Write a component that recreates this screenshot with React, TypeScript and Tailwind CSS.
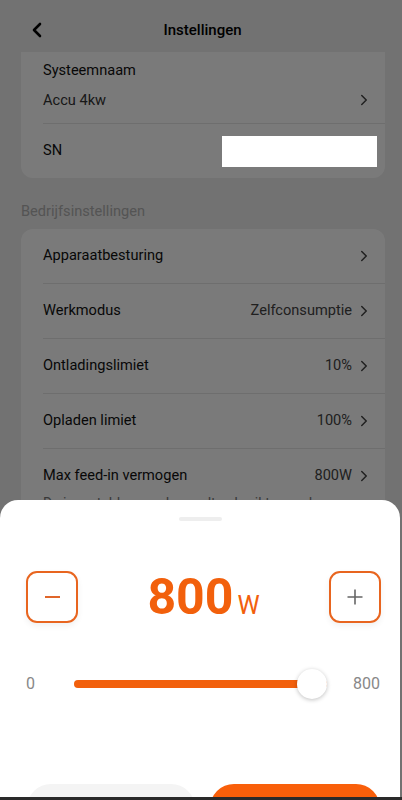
import React, { useState } from 'react'
import { ChevronLeft, ChevronRight } from 'lucide-react'

const font = { fontFamily: 'Roboto, "Noto Sans", sans-serif' }

interface RowProps {
  label: string
  value?: string
}

function SettingRow({ label, value }: RowProps) {
  return (
    <div className="pl-[22px]">
      <div className="flex h-[55px] items-center justify-between border-b border-[#e6e6e6] pr-[12px]">
        <span className="text-[14.6px] text-[#111]">{label}</span>
        <div className="flex items-center gap-[3px]">
          {value && <span className="text-[14.6px] text-[#444]">{value}</span>}
          <ChevronRight className="h-[18px] w-[18px] text-[#444]" strokeWidth={2} />
        </div>
      </div>
    </div>
  )
}

export default function App() {
  const [power, setPower] = useState(800)
  const max = 800
  const pct = (power / max) * 100

  return (
    <div className="relative h-[800px] w-full overflow-hidden bg-[#eeeeee]" style={font}>
      {/* Header */}
      <div className="flex h-[52px] items-center bg-[#eeeeee] pt-[8px]">
        <button className="ml-[25px] flex h-[24px] w-[24px] items-center justify-center text-black">
          <ChevronLeft className="h-[26px] w-[26px]" strokeWidth={2.6} />
        </button>
        <div className="flex-1 pr-[46px] text-center text-[15px] font-medium text-black">
          Instellingen
        </div>
      </div>

      {/* Scrolled content */}
      <div className="pl-[21px] pr-[17px]">
        <div className="rounded-b-xl bg-white">
          <div className="pl-[22px] pt-[8px]">
            <div className="text-[14.6px] leading-[20px] text-[#111]">Systeemnaam</div>
            <div className="mt-[10px] flex items-center justify-between border-b border-[#e6e6e6] pb-[13px] pr-[12px]">
              <span className="text-[14.6px] leading-[20px] text-[#333]">Accu 4kw</span>
              <ChevronRight className="h-[18px] w-[18px] text-[#444]" strokeWidth={2} />
            </div>
          </div>
          <div className="flex h-[54px] items-center justify-between pl-[22px] pr-[8px]">
            <span className="text-[14.6px] text-[#111]">SN</span>
            <div className="relative z-20 mt-[1px] h-[31px] w-[155px] bg-white" />
          </div>
        </div>

        <div className="mt-[23px] text-[14.6px] text-[#b0b0b0]">Bedrijfsinstellingen</div>

        <div className="mt-[6px] rounded-xl bg-white">
          <SettingRow label="Apparaatbesturing" />
          <SettingRow label="Werkmodus" value="Zelfconsumptie" />
          <SettingRow label="Ontladingslimiet" value="10%" />
          <SettingRow label="Opladen limiet" value="100%" />
          <div className="pb-[16px] pl-[22px] pr-[12px] pt-[17px]">
            <div className="flex h-[20px] items-center justify-between">
              <span className="text-[14.6px] text-[#111]">Max feed-in vermogen</span>
              <div className="flex items-center gap-[3px]">
                <span className="text-[14.6px] text-[#444]">800W</span>
                <ChevronRight className="h-[18px] w-[18px] text-[#444]" strokeWidth={2} />
              </div>
            </div>
            <p className="mt-[7px] text-[14px] leading-[20px] text-[#777]">
              De ingestelde waarde wordt gebruikt voor de maximale teruglevering aan het net.
            </p>
          </div>
        </div>
      </div>

      {/* Dim overlay */}
      <div className="absolute inset-0 z-10 bg-black/[0.52]" />

      {/* Bottom sheet */}
      <div className="absolute bottom-0 left-0 z-30 flex h-[300px] w-[400px] flex-col overflow-hidden rounded-t-[18px] bg-white">
        <div className="mx-auto mt-[17px] h-[4px] w-[43px] shrink-0 rounded-full bg-[#eeeeee]" />

        <div className="mt-[50px] flex shrink-0 items-center justify-between pl-[26px] pr-[19px]">
          <button
            onClick={() => setPower(Math.max(0, power - 10))}
            className="flex h-[52px] w-[52px] items-center justify-center rounded-[11px] border-2 border-[#e8651f] shadow-[0_3px_6px_rgba(0,0,0,0.06)]"
          >
            <span className="block h-[2px] w-[15px] bg-[#e0662a]" />
          </button>
          <div className="flex items-baseline text-[#f2600c]">
            <span className="text-[50px] font-bold leading-none">{power}</span>
            <span className="ml-[4px] text-[25px] leading-none">W</span>
          </div>
          <button
            onClick={() => setPower(Math.min(max, power + 10))}
            className="flex h-[52px] w-[52px] items-center justify-center rounded-[11px] border-2 border-[#e8651f] shadow-[0_3px_6px_rgba(0,0,0,0.06)]"
          >
            <svg width="18" height="18" viewBox="0 0 18 18" fill="none">
              <path d="M9 1.5v15M1.5 9h15" stroke="#666" strokeWidth="1.6" />
            </svg>
          </button>
        </div>

        <div className="mt-[46px] flex h-[30px] shrink-0 items-center pl-[26px] pr-[20px]">
          <span className="w-[48px] text-[16px] text-[#888]">0</span>
          <div className="relative h-[8px] w-[253px] rounded-full bg-[#eeeeee]">
            <div className="h-full rounded-full bg-[#f2600c]" style={{ width: `${pct}%` }} />
            <div
              className="absolute top-1/2 h-[30px] w-[30px] -translate-y-1/2 rounded-full bg-white shadow-[0_1px_4px_rgba(0,0,0,0.25)]"
              style={{ left: `calc(${pct}% - 30px)` }}
            />
          </div>
          <span className="flex-1 text-right text-[16px] text-[#888]">800</span>
        </div>

        <div className="mt-[85px] flex shrink-0 gap-[15px] pl-[27px] pr-[20px]">
          <button className="flex h-[48px] w-[168px] items-center justify-center rounded-full bg-[#f4f4f4] text-[16px] text-[#333]">
            Annuleren
          </button>
          <button className="flex h-[48px] flex-1 items-center justify-center rounded-full bg-[#f95f0a] text-[16px] text-white">
            Bevestigen
          </button>
        </div>
      </div>

      {/* Screen edge */}
      <div className="absolute bottom-0 left-0 z-40 h-[3px] w-full bg-[#2a2a2a]" />
    </div>
  )
}
